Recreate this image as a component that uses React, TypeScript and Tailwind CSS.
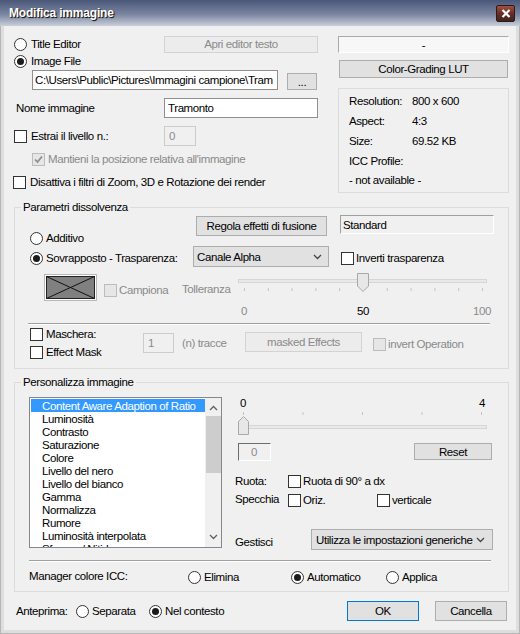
import React from 'react';

const Radio = ({ checked }: { checked?: boolean }) => (
  <span className="flex h-[13px] w-[13px] shrink-0 items-center justify-center rounded-full border border-[#333333] bg-white">
    {checked && <span className="h-[7px] w-[7px] rounded-full bg-[#1b1b1b]" />}
  </span>
);

const Check = ({ disabled, checked }: { disabled?: boolean; checked?: boolean }) => (
  <span
    className={`flex h-[13px] w-[13px] shrink-0 items-center justify-center border ${
      disabled ? 'border-[#bcbcbc] bg-[#e6e6e6]' : 'border-[#333333] bg-white'
    }`}
  >
    {checked && (
      <svg width="11" height="11" viewBox="0 0 11 11">
        <path d="M2 5.5 L4.5 8 L9 2.5" fill="none" stroke={disabled ? '#8b8b8b' : '#222'} strokeWidth="1.7" />
      </svg>
    )}
  </span>
);

const Btn = ({
  children,
  className = '',
  disabled,
  focused,
}: {
  children: React.ReactNode;
  className?: string;
  disabled?: boolean;
  focused?: boolean;
}) => (
  <div
    className={`flex shrink-0 items-center justify-center border ${
      disabled
        ? 'border-[#d3d3d3] bg-[#ececec] text-[#8a8a8a]'
        : focused
          ? 'border-[#0078d7] bg-[#e1e1e1]'
          : 'border-[#adadad] bg-[#e1e1e1]'
    } ${className}`}
  >
    {children}
  </div>
);

const Chevron = () => (
  <svg width="9" height="6" viewBox="0 0 9 6" className="shrink-0">
    <path d="M1 1 L4.5 4.5 L8 1" fill="none" stroke="#444" strokeWidth="1.3" />
  </svg>
);

const listItems = [
  'Content Aware Adaption of Ratio',
  'Luminosità',
  'Contrasto',
  'Saturazione',
  'Colore',
  'Livello del nero',
  'Livello del bianco',
  'Gamma',
  'Normalizza',
  'Rumore',
  'Luminosità interpolata',
  'Sfocare / Nitidezza',
];

const Legend = ({ children }: { children: React.ReactNode }) => (
  <span className="absolute -top-[8px] left-[6px] bg-[#f0f0f0] px-[2px] leading-[14px]">{children}</span>
);

export default function App() {
  return (
    <div className="relative h-[634px] w-[520px] overflow-hidden whitespace-nowrap bg-[#f0f0f0] font-['Liberation_Sans',Arial,sans-serif] text-[11.5px] leading-[14px] tracking-[-0.4px] text-black shadow-[inset_0_0_0_1px_#b5b5b5,inset_0_0_0_4px_#dedede]">
      {/* title bar */}
      <div className="flex h-[26px] items-center justify-between bg-[linear-gradient(180deg,#4a5778_0%,#7a85a1_55%,#c9ced9_100%)]">
        <span className="ml-[9px] text-[12px] font-bold tracking-[-0.2px] text-white [text-shadow:1px_1px_1px_#000]">
          Modifica immagine
        </span>
        <div className="mr-[5px] flex h-[17px] w-[19px] items-center justify-center rounded-[2px] border border-[#2a1a18] bg-[linear-gradient(180deg,#a3503f,#6a2d25_50%,#3c2522)]">
          <svg width="10" height="9" viewBox="0 0 10 9">
            <path d="M1.5 1 L8.5 8 M8.5 1 L1.5 8" stroke="#fff" strokeWidth="2.2" />
          </svg>
        </div>
      </div>

      {/* top section */}
      <div className="flex h-[167px]">
        <div className="flex w-[338px] flex-col">
          <div className="mt-[9px] flex h-[18px] items-center">
            <div className="ml-[14px] flex w-[150px] items-center gap-[4px]">
              <Radio />
              <span>Title Editor</span>
            </div>
            <Btn disabled className="h-[17px] w-[154px]">
              Apri editor testo
            </Btn>
          </div>
          <div className="flex h-[16px] items-center">
            <div className="ml-[14px] flex items-center gap-[4px]">
              <Radio checked />
              <span>Image File</span>
            </div>
          </div>
          <div className="mt-[1px] flex h-[20px] items-end">
            <div className="ml-[32px] flex h-[20px] w-[246px] items-center overflow-hidden border border-[#8f8f8f] bg-white pl-[2px]">
              C:\Users\Public\Pictures\Immagini campione\Tram
            </div>
            <Btn className="ml-[9px] h-[17px] w-[30px]">...</Btn>
          </div>
          <div className="mt-[8px] flex h-[20px] items-center">
            <span className="ml-[16px] w-[148px]">Nome immagine</span>
            <div className="flex h-[20px] w-[154px] items-center border border-[#8f8f8f] bg-white pl-[3px]">Tramonto</div>
          </div>
          <div className="mt-[8px] flex h-[20px] items-center">
            <div className="ml-[14px] flex w-[150px] items-center gap-[4px]">
              <Check />
              <span>Estrai il livello n.:</span>
            </div>
            <div className="flex h-[20px] w-[32px] items-center border border-[#cccccc] bg-[#f0f0f0] pl-[4px] text-[#8a8a8a]">0</div>
          </div>
          <div className="mt-[6px] flex h-[14px] items-center">
            <div className="ml-[32px] flex items-center gap-[3px] text-[#8a8a8a]">
              <Check disabled checked />
              <span>Mantieni la posizione relativa all'immagine</span>
            </div>
          </div>
          <div className="mt-[9px] flex h-[14px] items-center">
            <div className="ml-[13px] flex items-center gap-[4px]">
              <Check />
              <span>Disattiva i filtri di Zoom, 3D e Rotazione dei render</span>
            </div>
          </div>
        </div>

        <div className="flex w-[171px] flex-col">
          <div className="mt-[10px] flex h-[17px] items-center justify-center border border-[#a9a9a9] border-b-white border-r-white bg-[#f7f7f7]">
            -
          </div>
          <Btn className="ml-[1px] mt-[7px] h-[18px] w-[169px]">Color-Grading LUT</Btn>
          <div className="mt-[10px] flex h-[105px] flex-col border border-[#dcdcdc] pl-[10px] pt-[2px]">
            <div className="flex h-[20px] items-center">
              <span className="w-[63px]">Resolution:</span>
              <span>800 x 600</span>
            </div>
            <div className="flex h-[20px] items-center">
              <span className="w-[63px]">Aspect:</span>
              <span>4:3</span>
            </div>
            <div className="flex h-[20px] items-center">
              <span className="w-[63px]">Size:</span>
              <span>69.52 KB</span>
            </div>
            <div className="flex h-[19px] items-center">ICC Profile:</div>
            <div className="flex h-[20px] items-center">- not available -</div>
          </div>
        </div>
      </div>

      {/* Parametri dissolvenza */}
      <div className="relative ml-[14px] mt-[14px] flex h-[162px] w-[495px] flex-col border border-[#dcdcdc]">
        <Legend>Parametri dissolvenza</Legend>
        <div className="mt-[7px] flex h-[30px]">
          <div className="ml-[15px] flex h-[14px] w-[166px] items-center gap-[3px] self-end">
            <Radio />
            <span>Additivo</span>
          </div>
          <Btn className="mt-[1px] h-[20px] w-[131px]">Regola effetti di fusione</Btn>
          <div className="ml-[13px] flex h-[19px] w-[154px] items-center border border-[#a0a0a0] border-b-white border-r-white bg-[#f0f0f0] pl-[2px]">
            Standard
          </div>
        </div>
        <div className="mt-[1px] flex h-[21px] items-center">
          <div className="ml-[15px] mt-[3px] flex w-[163px] items-center gap-[3px]">
            <Radio checked />
            <span>Sovrapposto - Trasparenza:</span>
          </div>
          <div className="flex h-[21px] w-[136px] items-center justify-between border border-[#adadad] bg-[#e1e1e1] pl-[3px] pr-[6px]">
            <span>Canale Alpha</span>
            <Chevron />
          </div>
          <div className="ml-[12px] mt-[3px] flex items-center gap-[2px]">
            <Check />
            <span>Inverti trasparenza</span>
          </div>
        </div>
        <div className="flex h-[50px]">
          <div className="ml-[29px] mt-[7px] h-[27px] w-[53px] border border-[#b8b8b8] bg-white p-px">
            <svg width="49" height="23" viewBox="0 0 49 23" className="block">
              <rect x="0.5" y="0.5" width="48" height="22" fill="#808080" stroke="#222" />
              <path d="M0.5 0.5 L48.5 22.5 M48.5 0.5 L0.5 22.5" stroke="#111" strokeWidth="1" />
            </svg>
          </div>
          <div className="ml-[7px] mt-[16px] flex h-[14px] w-[78px] items-center gap-[2px] text-[#8a8a8a]">
            <Check disabled />
            <span>Campiona</span>
          </div>
          <span className="mt-[15px] h-[14px] w-[56px] text-[#8a8a8a]">Tolleranza</span>
          <div className="relative mt-[4px] h-[46px] w-[250px]">
            <svg width="250" height="22" viewBox="0 0 250 22" className="block">
              <rect x="0.5" y="8.5" width="248" height="3" fill="#e7eaea" stroke="#d6d6d6" />
              {[0, 1, 2, 3, 4, 5, 6, 7, 8, 9, 10].map((i) => (
                <line key={i} x1={6.5 + i * 23.8} x2={6.5 + i * 23.8} y1="17" y2="20" stroke="#c4c4c4" />
              ))}
              <path d="M119.5 2.5 H130.5 V15 L125 20.5 L119.5 15 Z" fill="#e7e7e7" stroke="#a8a8a8" />
            </svg>
            <span className="absolute left-[6px] top-[33px] -translate-x-1/2 text-[#8a8a8a]">0</span>
            <span className="absolute left-[125px] top-[33px] -translate-x-1/2">50</span>
            <span className="absolute left-[244px] top-[33px] -translate-x-1/2 text-[#8a8a8a]">100</span>
          </div>
        </div>
        <div className="ml-[13px] mt-[6px] h-[2px] w-[462px] border-b border-t border-b-white border-t-[#a0a0a0]" />
        <div className="flex h-[32px] items-start">
          <div className="ml-[15px] flex w-[113px] flex-col">
            <div className="mt-[2px] flex h-[14px] items-center gap-[3px]">
              <Check />
              <span>Maschera:</span>
            </div>
            <div className="mt-[4px] flex h-[14px] items-center gap-[3px]">
              <Check />
              <span>Effect Mask</span>
            </div>
          </div>
          <div className="mt-[8px] flex h-[20px] w-[31px] items-center border border-[#cccccc] bg-[#f0f0f0] pl-[4px] text-[#8a8a8a]">1</div>
          <span className="ml-[8px] mt-[11px] w-[63px] text-[#8a8a8a]">(n) tracce</span>
          <Btn disabled className="mt-[7px] h-[20px] w-[117px]">
            masked Effects
          </Btn>
          <div className="ml-[11px] mt-[12px] flex h-[14px] items-center gap-[2px] text-[#8a8a8a]">
            <Check disabled />
            <span>invert Operation</span>
          </div>
        </div>
      </div>

      {/* Personalizza immagine */}
      <div className="relative ml-[14px] mt-[13px] flex h-[210px] w-[495px] flex-col border border-[#dcdcdc]">
        <Legend>Personalizza immagine</Legend>
        <div className="flex">
          <div className="ml-[14px] mt-[14px] flex h-[151px] w-[193px] border border-[#828790] bg-white">
            <div className="flex-1 overflow-hidden pl-px pt-px">
              {listItems.map((item, i) => (
                <div
                  key={item}
                  className={`flex h-[13px] items-center pl-[11px] ${i === 0 ? 'bg-[#3399ff] text-white' : ''}`}
                >
                  {item}
                </div>
              ))}
            </div>
            <div className="flex w-[16px] flex-col items-center bg-[#f0f0f0]">
              <svg width="9" height="6" viewBox="0 0 9 6" className="mt-[7px]">
                <path d="M1 5 L4.5 1.5 L8 5" fill="none" stroke="#606060" strokeWidth="1.3" />
              </svg>
              <div className="mt-[5px] h-[57px] w-[15px] bg-[#cdcdcd]" />
              <div className="flex-1" />
              <svg width="9" height="6" viewBox="0 0 9 6" className="mb-[7px]">
                <path d="M1 1 L4.5 4.5 L8 1" fill="none" stroke="#606060" strokeWidth="1.3" />
              </svg>
            </div>
          </div>

          <div className="ml-[13px] flex w-[260px] flex-col">
            <div className="relative ml-[3px] mt-[13px] h-[40px] w-[250px]">
              <span className="absolute left-[5px] top-0 -translate-x-1/2">0</span>
              <span className="absolute left-[244px] top-0 -translate-x-1/2">4</span>
              <svg width="250" height="26" viewBox="0 0 250 26" className="absolute left-0 top-[14px] block">
                {[0, 1, 2, 3, 4].map((i) => (
                  <line key={i} x1={5.5 + i * 59.5} x2={5.5 + i * 59.5} y1="2" y2="5" stroke="#c4c4c4" />
                ))}
                <rect x="0.5" y="15.5" width="248" height="3" fill="#e7eaea" stroke="#d6d6d6" />
                <path d="M0.5 11.5 L5.5 6.5 L10.5 11.5 V24.5 H0.5 Z" fill="#e7e7e7" stroke="#a8a8a8" />
              </svg>
            </div>
            <div className="mt-[7px] flex h-[18px] items-start">
              <div className="ml-[3px] flex h-[18px] w-[33px] items-center border border-[#6d6d6d] border-b-white border-r-white bg-[#f0f0f0] pl-[12px] text-[#8a8a8a]">
                0
              </div>
              <Btn className="ml-[143px] h-[17px] w-[78px]">Reset</Btn>
            </div>
            <div className="mt-[13px] flex h-[14px] items-center">
              <span className="w-[53px]">Ruota:</span>
              <Check />
              <span className="ml-[2px]">Ruota di 90° a dx</span>
            </div>
            <div className="mt-[5px] flex h-[14px] items-center">
              <span className="mb-[3px] w-[53px]">Specchia</span>
              <div className="flex w-[89px] items-center gap-[2px]">
                <Check />
                <span>Oriz.</span>
              </div>
              <Check />
              <span className="ml-[2px]">verticale</span>
            </div>
            <div className="mt-[22px] flex h-[21px] items-center">
              <span className="mt-[4px] w-[76px]">Gestisci</span>
              <div className="flex h-[21px] w-[182px] items-center justify-between border border-[#adadad] bg-[#e1e1e1] pl-[4px] pr-[7px]">
                <span>Utilizza le impostazioni generiche</span>
                <Chevron />
              </div>
            </div>
          </div>
        </div>
        <div className="ml-[14px] mt-[10px] h-[2px] w-[462px] border-b border-t border-b-white border-t-[#a0a0a0]" />
        <div className="mt-[8px] flex h-[14px] items-center">
          <span className="mb-[2px] ml-[14px] w-[159px]">Manager colore ICC:</span>
          <div className="flex w-[103px] items-center gap-[3px]">
            <Radio />
            <span>Elimina</span>
          </div>
          <div className="flex w-[95px] items-center gap-[3px]">
            <Radio checked />
            <span>Automatico</span>
          </div>
          <div className="flex items-center gap-[3px]">
            <Radio />
            <span>Applica</span>
          </div>
        </div>
      </div>

      {/* bottom row */}
      <div className="mt-[9px] flex h-[20px] items-center">
        <span className="ml-[16px] w-[60px]">Anteprima:</span>
        <div className="flex w-[73px] items-center gap-[3px]">
          <Radio />
          <span>Separata</span>
        </div>
        <div className="flex w-[198px] items-center gap-[3px]">
          <Radio checked />
          <span>Nel contesto</span>
        </div>
        <Btn focused className="h-[20px] w-[72px]">
          OK
        </Btn>
        <Btn className="ml-[16px] h-[20px] w-[72px]">Cancella</Btn>
      </div>
    </div>
  );
}
